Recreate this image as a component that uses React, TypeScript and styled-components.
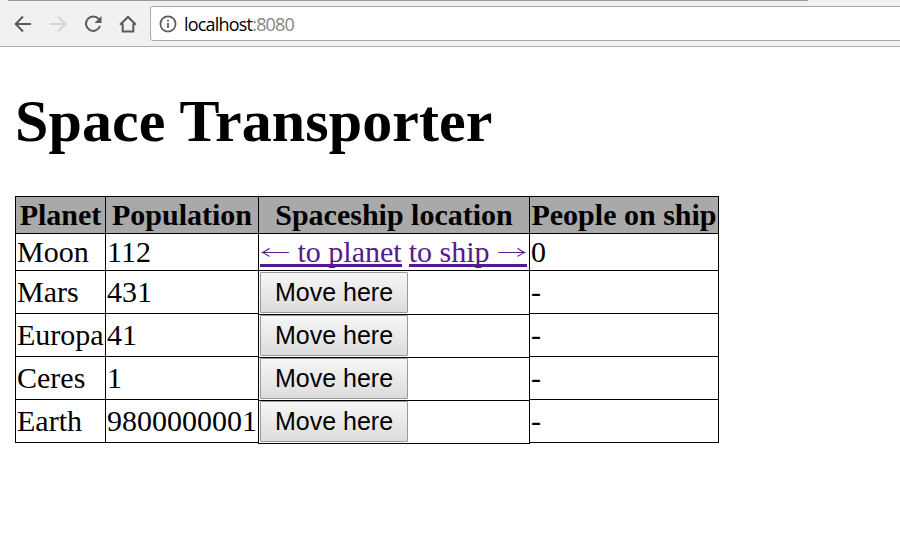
import React from 'react';
import styled, { createGlobalStyle } from 'styled-components';

const GlobalStyle = createGlobalStyle`
  * { box-sizing: border-box; }
  html, body { margin: 0; background: #fff; overflow: hidden; }
`;

const Page = styled.div`
  width: 900px;
  height: 543px;
  overflow: hidden;
  color: #000;
  font: 30px/33px "Liberation Serif", "Times New Roman", serif;
`;

const TabEdge = styled.div`
  width: 800px;
  height: 1px;
  margin-left: 8px;
  background: #999;
`;

const Browser = styled.header`
  height: 47px;
  background: #f1f1f1;
  border-bottom: 1px solid #afafaf;
`;

const Toolbar = styled.div`
  display: flex;
  align-items: flex-start;
  padding: 5px 0 0 13px;
`;

const Icon = styled.svg<{ $muted?: boolean }>`
  display: block;
  flex: none;
  width: 20px;
  height: 20px;
  margin: 8px 15px 0 0;
  fill: none;
  stroke: ${(p) => (p.$muted ? '#d3d3d3' : '#5a5a5a')};
  stroke-width: 2;
`;

const AddressBar = styled.div`
  display: flex;
  flex: none;
  align-items: center;
  width: 760px;
  height: 35px;
  margin-left: -3px;
  padding-left: 8px;
  background: #fff;
  border: 1px solid #a8a8a8;
  border-radius: 3px;
`;

const InfoIcon = styled(Icon)`
  width: 18px;
  height: 18px;
  margin: 0 7px 0 0;
  stroke-width: 1.7;
`;

const Url = styled.span`
  font: 18px/24px "Open Sans", "Noto Sans", sans-serif;
  letter-spacing: -0.8px;
  white-space: nowrap;
`;

const Port = styled.span`
  color: #858585;
`;

const Title = styled.h1`
  margin: 40px 0 0 15px;
  height: 109px;
  font-size: 60px;
  line-height: 69px;
  letter-spacing: 0.08px;
  font-weight: bold;
  white-space: nowrap;
`;

const Table = styled.div`
  display: grid;
  grid-template-columns: 90px 153px 271px 189px;
  grid-template-rows: 37px 37px repeat(4, 43px);
  width: 703px;
  margin-left: 15px;
`;

const Cell = styled.div<{ $tall?: boolean }>`
  margin: 0 -1px -1px 0;
  border: 1px solid #000;
  padding: ${(p) => (p.$tall ? 4 : 1)}px 1px 0;
  display: flex;
  align-items: flex-start;
  gap: 7px;
  white-space: nowrap;
`;

const HeadCell = styled(Cell)`
  justify-content: center;
  background: #a9a9a9;
  font-weight: bold;
`;

const ActionCell = styled(Cell)<{ $first: boolean }>`
  margin-top: ${(p) => (p.$first ? 0 : 1)}px;
  margin-bottom: -2px;
  padding-top: ${(p) => (p.$first ? 1 : 0)}px;
`;

const Link = styled.a`
  height: 33px;
  color: #551a8b;
  background: linear-gradient(#551a8b, #551a8b) 0 29px / 100% 3px no-repeat;
`;

const Arrow = styled.span`
  display: inline-block;
  font-family: "Noto Sans CJK SC", sans-serif;
  font-weight: 300;
  line-height: 0;
  transform: translateY(2px) scaleY(0.6);
`;

const MoveButton = styled.button`
  width: 148px;
  height: 41px;
  padding: 0 0 1px;
  border: 1px solid #999;
  border-radius: 1px;
  background: linear-gradient(#f6f6f6, #dcdcdc);
  color: #000;
  font: 25px/30px "Liberation Sans", Arial, sans-serif;
`;

const headings = ['Planet', 'Population', 'Spaceship location', 'People on ship'];
const destinations = [
  { name: 'Mars', population: 431 },
  { name: 'Europa', population: 41 },
  { name: 'Ceres', population: 1 },
  { name: 'Earth', population: 9800000001 },
];

export default function App() {
  return (
    <Page>
      <GlobalStyle />
      <Browser>
        <TabEdge />
        <Toolbar>
          <Icon viewBox="0 0 20 20"><path d="M18 10H3M10 2.5L2.7 10l7.3 7.5" /></Icon>
          <Icon viewBox="0 0 20 20" $muted><path d="M2 10h15M10 2.5l7.3 7.5-7.3 7.5" /></Icon>
          <Icon viewBox="0 0 20 20">
            <path d="M15.8 5.2A7.2 7.2 0 1 0 17 12" />
            <path d="M18.5 2v7h-7z" fill="#5a5a5a" stroke="none" />
          </Icon>
          <Icon viewBox="0 0 20 20"><path d="M2 10.7L10 3l8 7.7M4.7 9.5v8h10.6v-8" /></Icon>
          <AddressBar>
            <InfoIcon viewBox="0 0 18 18">
              <circle cx="9" cy="9" r="7.6" />
              <path d="M9 8v5M9 4.8v1.8" />
            </InfoIcon>
            <Url>localhost<Port>:8080</Port></Url>
          </AddressBar>
        </Toolbar>
      </Browser>
      <Title>Space Transporter</Title>
      <Table>
        {headings.map((heading) => <HeadCell key={heading}>{heading}</HeadCell>)}
        <Cell>Moon</Cell>
        <Cell>112</Cell>
        <Cell>
          <Link><Arrow>←</Arrow> to planet</Link>
          <Link>to ship <Arrow>→</Arrow></Link>
        </Cell>
        <Cell>0</Cell>
        {destinations.map(({ name, population }, i) => (
          <React.Fragment key={name}>
            <Cell $tall>{name}</Cell>
            <Cell $tall>{population}</Cell>
            <ActionCell $first={i === 0}><MoveButton>Move here</MoveButton></ActionCell>
            <Cell $tall>-</Cell>
          </React.Fragment>
        ))}
      </Table>
    </Page>
  );
}
